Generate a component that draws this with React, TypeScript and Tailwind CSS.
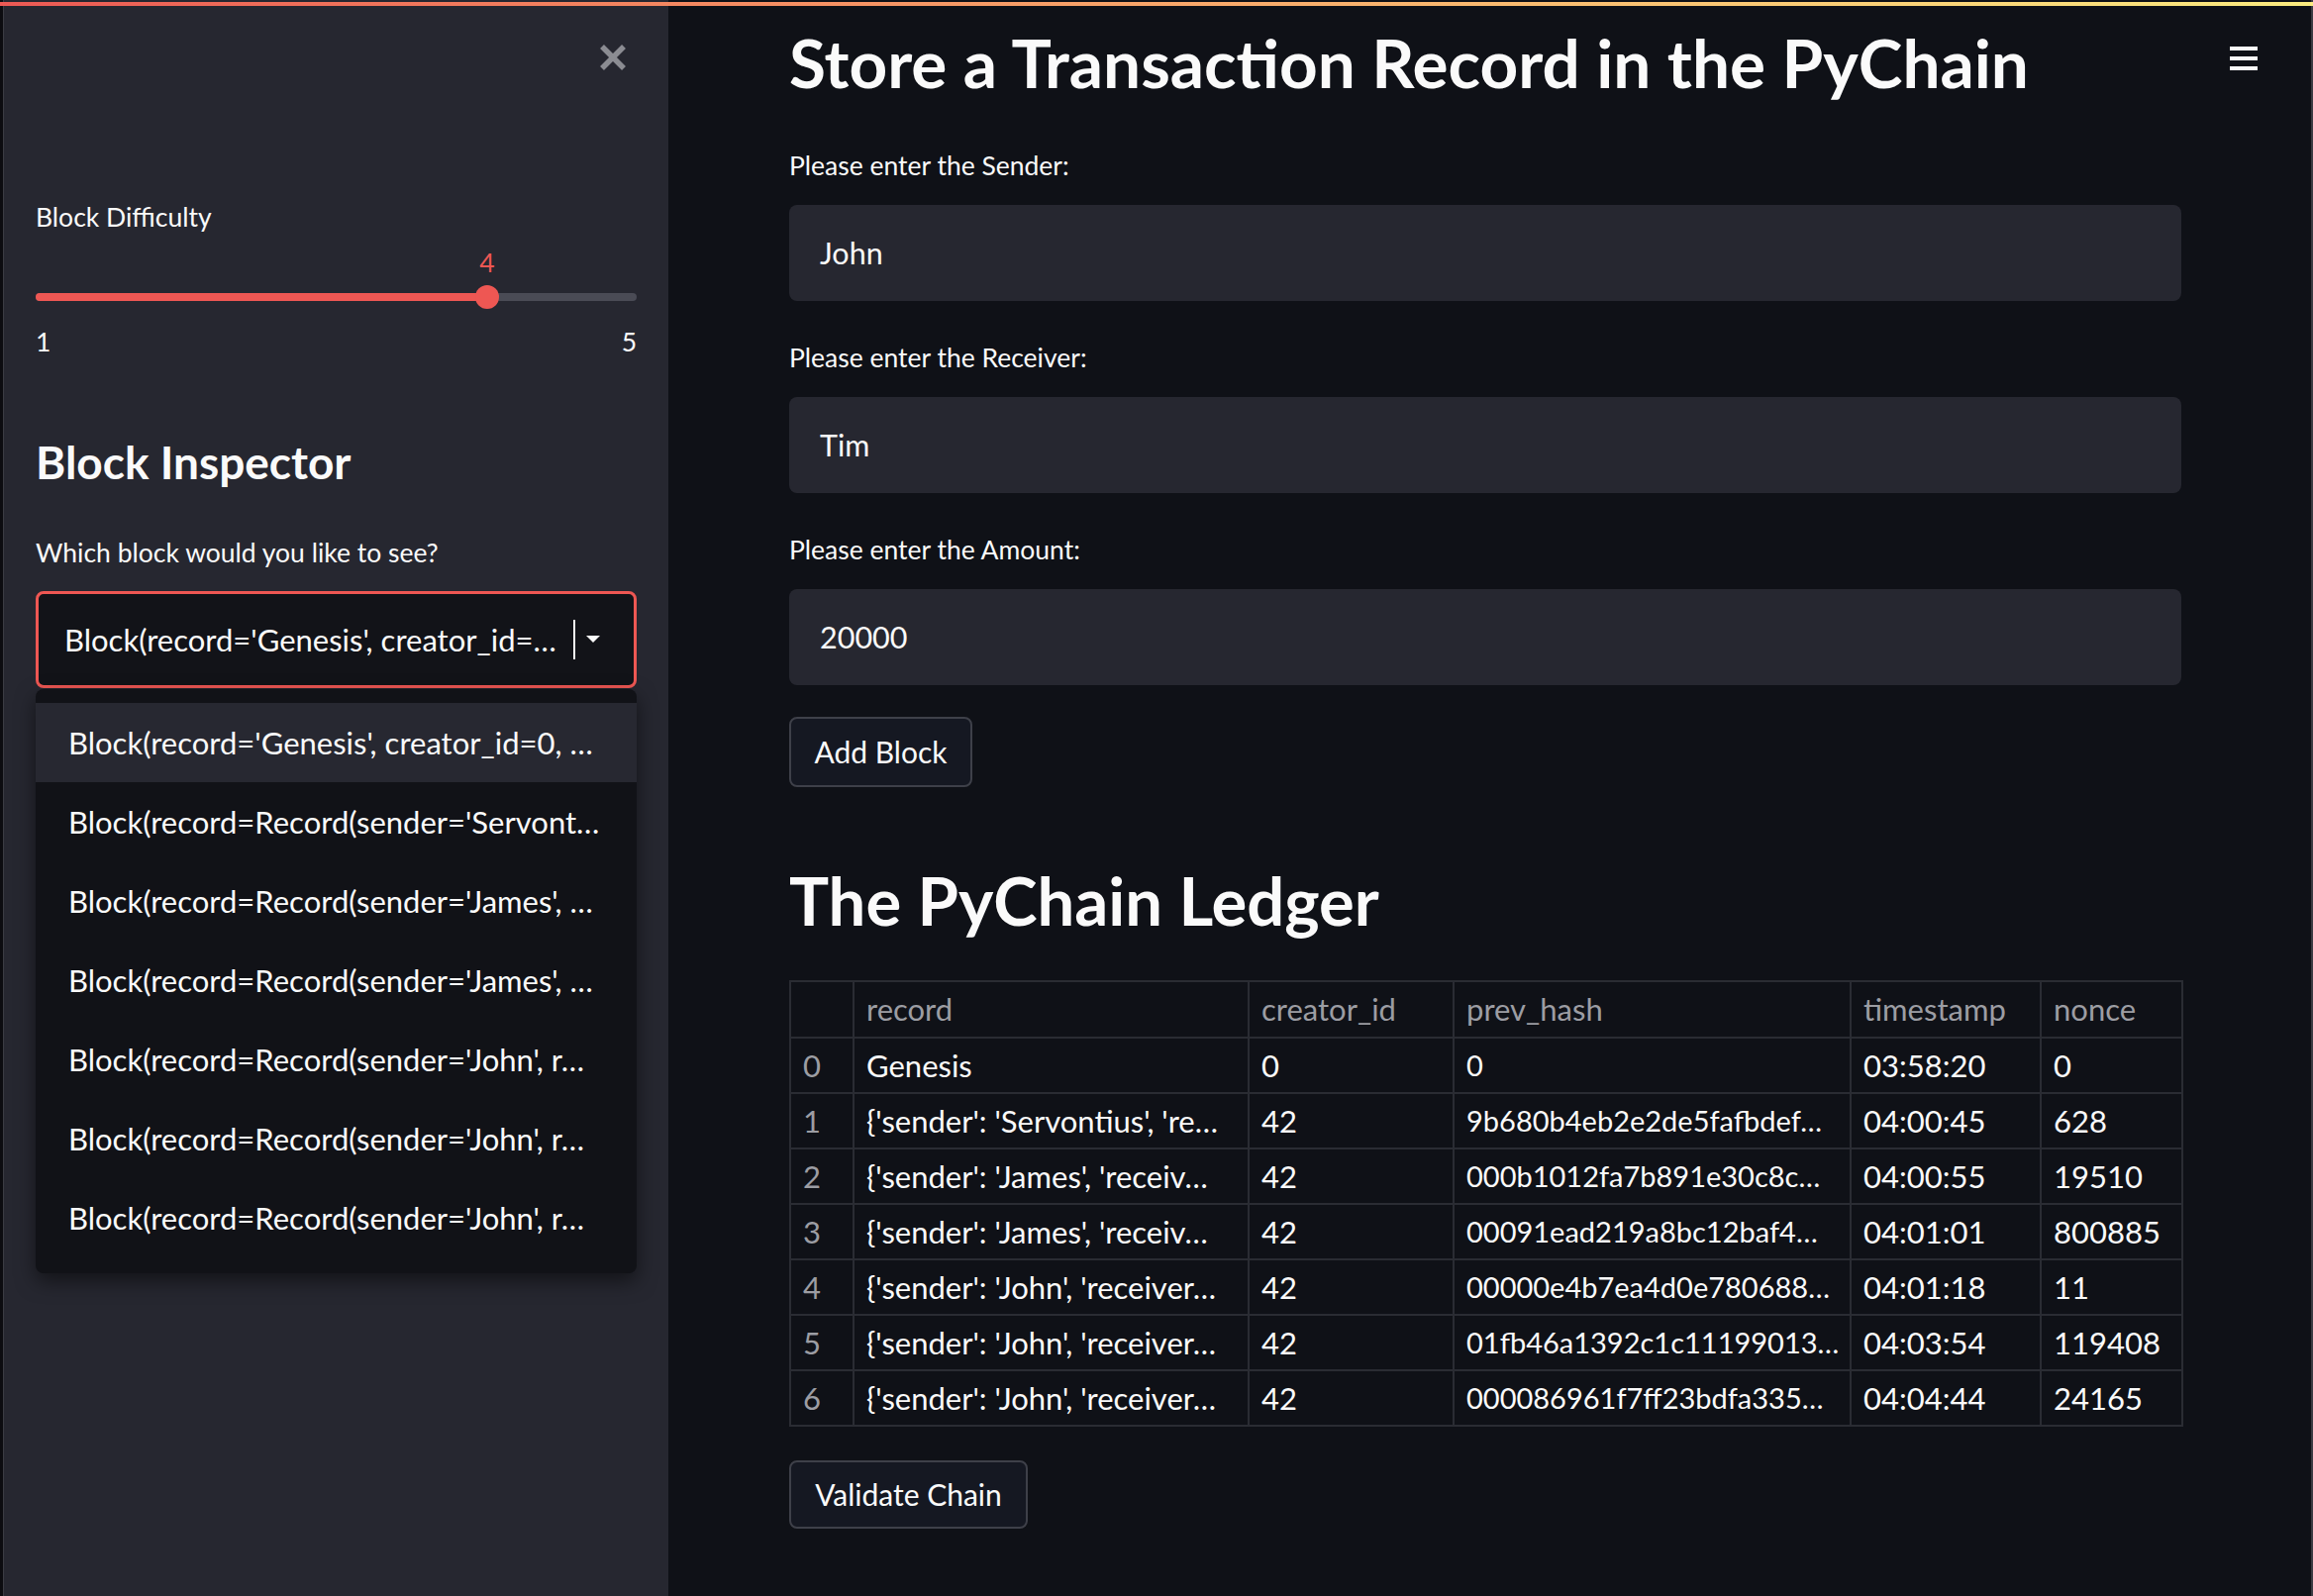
import React from "react";

const rows = [
  ["0", "Genesis", "0", "0", "03:58:20", "0"],
  ["1", "{'sender': 'Servontius', 're…", "42", "9b680b4eb2e2de5fafbdef…", "04:00:45", "628"],
  ["2", "{'sender': 'James', 'receiv…", "42", "000b1012fa7b891e30c8c…", "04:00:55", "19510"],
  ["3", "{'sender': 'James', 'receiv…", "42", "00091ead219a8bc12baf4…", "04:01:01", "800885"],
  ["4", "{'sender': 'John', 'receiver…", "42", "00000e4b7ea4d0e780688…", "04:01:18", "11"],
  ["5", "{'sender': 'John', 'receiver…", "42", "01fb46a1392c1c11199013…", "04:03:54", "119408"],
  ["6", "{'sender': 'John', 'receiver…", "42", "000086961f7ff23bdfa335…", "04:04:44", "24165"],
];

const menuItems = [
  "Block(record='Genesis', creator_id=0, …",
  "Block(record=Record(sender='Servont…",
  "Block(record=Record(sender='James', …",
  "Block(record=Record(sender='James', …",
  "Block(record=Record(sender='John', r…",
  "Block(record=Record(sender='John', r…",
  "Block(record=Record(sender='John', r…",
];

const colW = ["w-[64px]", "w-[399px]", "w-[207px]", "w-[401px]", "w-[192px]", "w-[143px]"];

function TextInput({ label, value, mt }: { label: string; value: string; mt: string }) {
  return (
    <div className={mt}>
      <div className="h-[36px] leading-[36px] text-[26.5px] text-[#fafafa]">{label}</div>
      <div className="mt-[22px] h-[97px] rounded-[8px] bg-[#262730] flex items-center pl-[31px] text-[30.5px] text-[#fafafa]">
        {value}
      </div>
    </div>
  );
}

export default function App() {
  return (
    <div className="relative w-[2336px] h-[1612px] overflow-hidden bg-[#0f1117] font-['Lato',sans-serif] flex">
      {/* top decoration */}
      <div className="absolute left-0 right-0 top-[2px] h-[4px] bg-gradient-to-r from-[#ec5954] to-[#faeb7f] z-20" />
      {/* left strip */}
      <div className="w-[4px] h-full bg-[#0c0c10] border-r border-[#3b3c43] shrink-0" />
      {/* sidebar */}
      <aside className="relative w-[671px] h-full bg-[#262730] shrink-0 pl-[32px] pr-[32px] pt-[44px] text-[#fafafa]">
        <div className="flex justify-end pr-[10px]">
          <svg width="28" height="28" viewBox="0 0 28 28">
            <line x1="3" y1="3" x2="25" y2="25" stroke="#8b8c92" strokeWidth="5.5" />
            <line x1="25" y1="3" x2="3" y2="25" stroke="#8b8c92" strokeWidth="5.5" />
          </svg>
        </div>
        <div className="mt-[129px] h-[36px] leading-[36px] text-[26.5px]">Block Difficulty</div>
        {/* slider */}
        <div className="relative mt-[10px] h-[116px]">
          <div className="absolute left-[456px] -translate-x-1/2 top-[0px] h-[36px] leading-[36px] text-[26.5px] text-[#ee5753]">4</div>
          <div className="absolute left-0 right-0 top-[49px] h-[8px] rounded-full bg-[#4a4b55]" />
          <div className="absolute left-0 w-[456px] top-[49px] h-[8px] rounded-full bg-[#ee5753]" />
          <div className="absolute left-[444px] top-[41px] w-[24px] h-[24px] rounded-full bg-[#ee5753]" />
          <div className="absolute left-0 right-0 top-[80px] h-[36px] leading-[36px] text-[26.5px] flex justify-between">
            <span>1</span>
            <span>5</span>
          </div>
        </div>
        <div className="mt-[74px] h-[60px] leading-[60px] text-[46px] font-bold">Block Inspector</div>
        <div className="mt-[43px] h-[36px] leading-[36px] text-[26.5px]">Which block would you like to see?</div>
        {/* select */}
        <div className="relative mt-[21px]">
          <div className="h-[98px] rounded-[8px] border-[3px] border-[#ee5753] bg-[#121318] flex items-center pl-[26px] pr-[20px]">
            <span className="flex-1 whitespace-nowrap overflow-hidden text-[31px]">Block(record='Genesis', creator_id=…</span>
            <div className="w-[2px] h-[40px] bg-[#fafafa] ml-[8px]" />
            <svg width="14" height="8" viewBox="0 0 14 8" className="ml-[11px] mr-[14px]">
              <polygon points="0,0 14,0 7,7" fill="#fafafa" />
            </svg>
          </div>
          {/* dropdown */}
          <div className="absolute left-0 right-0 top-[99px] z-10 rounded-[8px] bg-[#111217] pt-[14px] pb-[16px] shadow-[0_8px_20px_rgba(0,0,0,0.5)]">
            {menuItems.map((m, i) => (
              <div
                key={i}
                className={
                  "h-[80px] flex items-center pl-[33px] text-[31px] whitespace-nowrap overflow-hidden " +
                  (i === 0 ? "bg-[#272831]" : "")
                }
              >
                {m}
              </div>
            ))}
          </div>
        </div>
      </aside>
      {/* main */}
      <main className="relative flex-1 h-full pl-[122px] pt-[19px] text-[#fafafa]">
        <div className="absolute left-[1577px] top-[47px] w-[28px] flex flex-col gap-[6px]">
          <div className="h-[4px] bg-[#fafafa]" />
          <div className="h-[4px] bg-[#fafafa]" />
          <div className="h-[4px] bg-[#fafafa]" />
        </div>
        <div className="w-[1406px]">
          <h1 className="h-[88px] leading-[88px] text-[67.5px] font-bold whitespace-nowrap">Store a Transaction Record in the PyChain</h1>
          <TextInput label="Please enter the Sender:" value="John" mt="mt-[42px]" />
          <TextInput label="Please enter the Receiver:" value="Tim" mt="mt-[39px]" />
          <TextInput label="Please enter the Amount:" value="20000" mt="mt-[39px]" />
          <button className="mt-[32px] h-[71px] w-[185px] rounded-[8px] border-2 border-[#3e4049] bg-[#151822] text-[30px] text-[#fafafa] flex items-center justify-center">
            Add Block
          </button>
          <h2 className="mt-[74px] h-[80px] leading-[80px] text-[67px] font-bold">The PyChain Ledger</h2>
          <table className="mt-[41px] table-fixed border-collapse border-2 border-[#2a2c33] w-[1406px]">
            <thead>
              <tr className="h-[57px]">
                {["", "record", "creator_id", "prev_hash", "timestamp", "nonce"].map((h, i) => (
                  <th
                    key={i}
                    className={colW[i] + " border-2 border-[#2a2c33] text-left font-normal text-[31px] text-[#9c9da3] pl-[12px] whitespace-nowrap overflow-hidden"}
                  >
                    {h}
                  </th>
                ))}
              </tr>
            </thead>
            <tbody>
              {rows.map((r, ri) => (
                <tr key={ri} className="h-[56px]">
                  {r.map((c, ci) => (
                    <td
                      key={ci}
                      className={
                        "border-2 border-[#2a2c33] pl-[12px] whitespace-nowrap overflow-hidden " +
                        (ci === 3 ? "text-[29px] " : "text-[31px] ") +
                        (ci === 0 ? "text-[#9c9da3]" : "text-[#fafafa]")
                      }
                    >
                      {c}
                    </td>
                  ))}
                </tr>
              ))}
            </tbody>
          </table>
          <button className="mt-[34px] h-[69px] w-[241px] rounded-[8px] border-2 border-[#3e4049] bg-[#151822] text-[30px] text-[#fafafa] flex items-center justify-center">
            Validate Chain
          </button>
        </div>
      </main>
      <div className="w-[2px] h-full bg-[#3a3b42] shrink-0" />
    </div>
  );
}
